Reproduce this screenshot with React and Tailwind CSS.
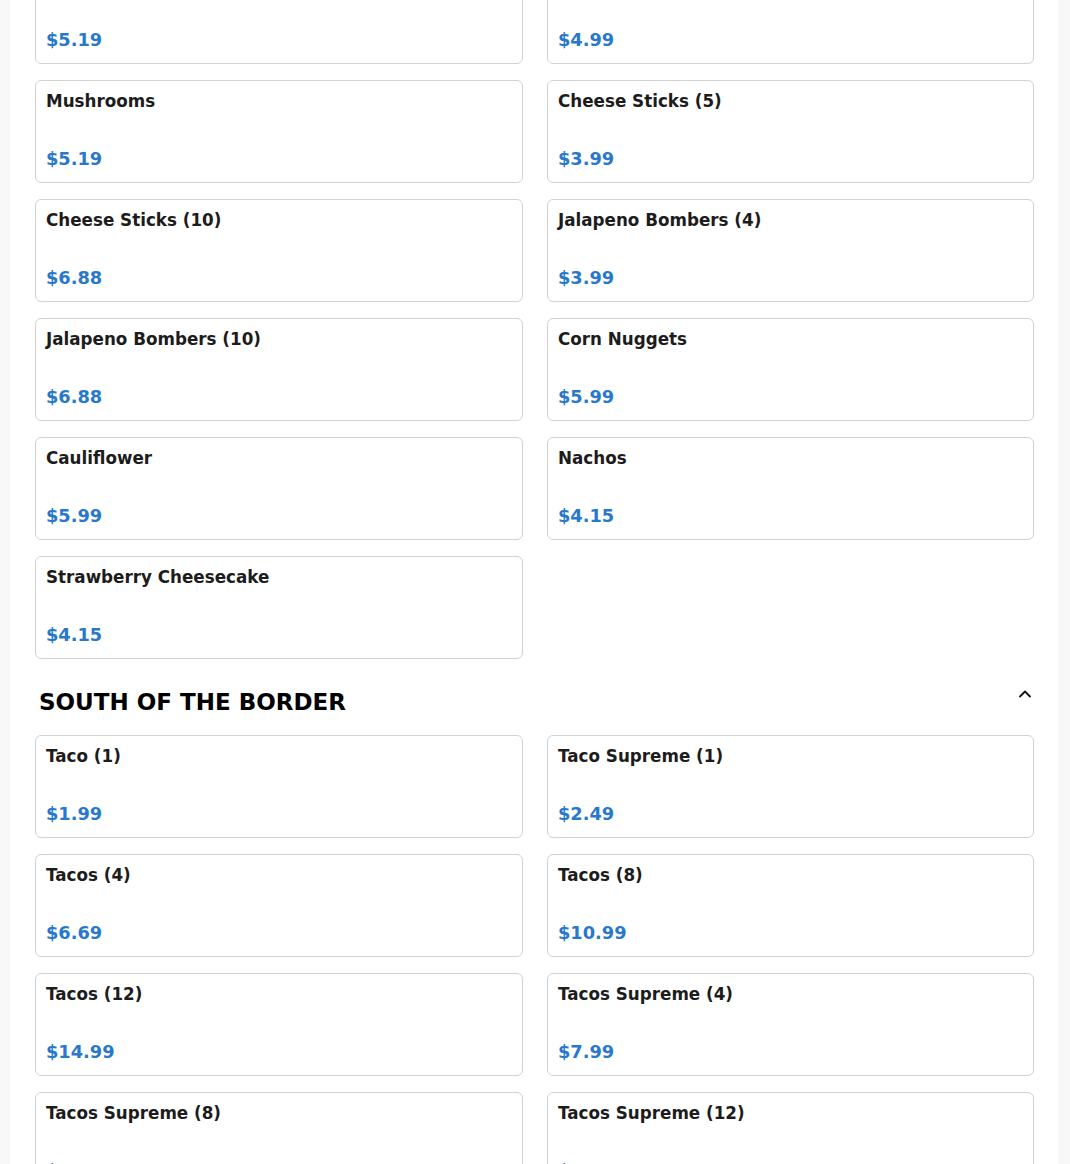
const font = { fontFamily: '"DejaVu Sans", sans-serif' };

const group1 = [
  ["Onion Rings", "$5.19"],
  ["Fried Pickles", "$4.99"],
  ["Mushrooms", "$5.19"],
  ["Cheese Sticks (5)", "$3.99"],
  ["Cheese Sticks (10)", "$6.88"],
  ["Jalapeno Bombers (4)", "$3.99"],
  ["Jalapeno Bombers (10)", "$6.88"],
  ["Corn Nuggets", "$5.99"],
  ["Cauliflower", "$5.99"],
  ["Nachos", "$4.15"],
  ["Strawberry Cheesecake", "$4.15"],
];

const group2 = [
  ["Taco (1)", "$1.99"],
  ["Taco Supreme (1)", "$2.49"],
  ["Tacos (4)", "$6.69"],
  ["Tacos (8)", "$10.99"],
  ["Tacos (12)", "$14.99"],
  ["Tacos Supreme (4)", "$7.99"],
  ["Tacos Supreme (8)", "$19.99"],
  ["Tacos Supreme (12)", "$27.99"],
];

function Card({ name, price }) {
  return (
    <div className="flex h-[103px] flex-col rounded-[6px] border border-[#d2d2d2] bg-white px-[10px] pb-[9px] pt-[11px]">
      <div className="text-[16.75px] font-bold leading-[19px] text-[#1c1c1c]">{name}</div>
      <div className="mt-[35px] text-[17.8px] font-bold leading-[26px] text-[#2878cc]">{price}</div>
    </div>
  );
}

function Grid({ items }) {
  return (
    <div className="grid grid-cols-[488px_487px] gap-x-[24px] gap-y-[16px]">
      {items.map(([n, p]) => (
        <Card key={n} name={n} price={p} />
      ))}
    </div>
  );
}

export default function App() {
  return (
    <div className="h-[1164px] overflow-hidden bg-[#f8f8f8] pl-[10px] pr-[12px]" style={font}>
      <div className="-mt-[39px] bg-white pb-10 pl-[25px] pr-[24px]">
        <Grid items={group1} />
        <div className="mb-[17px] mt-[27px] flex h-[32px] items-start justify-between pl-[4px] pr-[1px]">
          <h2 className="text-[23px] font-bold leading-[32px] text-black">SOUTH OF THE BORDER</h2>
          <svg className="mt-[0px]" width="16" height="16" viewBox="0 0 16 16" fill="none" stroke="#111" strokeWidth="1.8" strokeLinecap="round" strokeLinejoin="round">
            <path d="M3 10.5 L8 5.5 L13 10.5" />
          </svg>
        </div>
        <Grid items={group2} />
      </div>
    </div>
  );
}
